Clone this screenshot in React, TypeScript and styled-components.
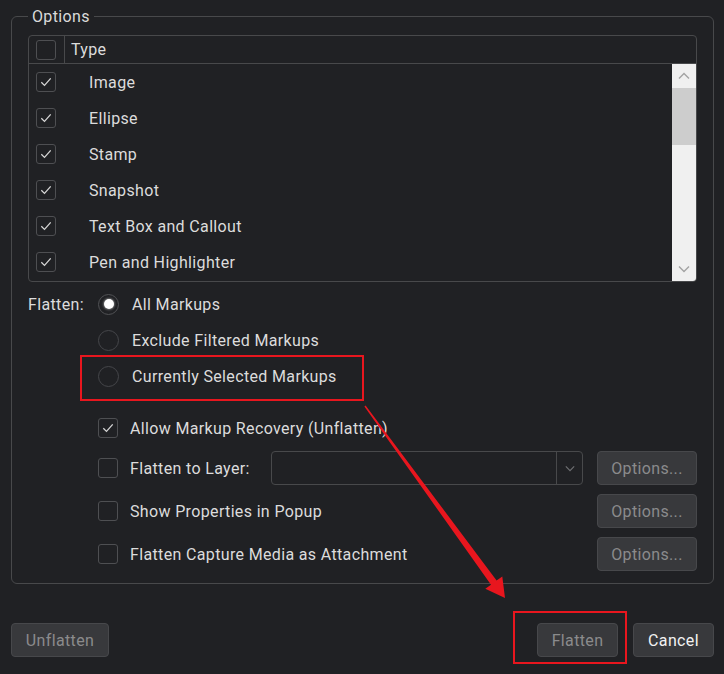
import React from 'react';
import styled, { createGlobalStyle } from 'styled-components';

const Global = createGlobalStyle`
  html, body { margin: 0; padding: 0; background: #202124; }
  body {
    font-family: Roboto, "Noto Sans", Arial, sans-serif;
    font-size: 16px;
    letter-spacing: 0.35px;
    color: #dcdcdc;
  }
  * { box-sizing: border-box; }
`;

const Page = styled.div`
  position: relative;
  width: 724px;
  height: 674px;
  padding: 7px 10px 0 11px;
  display: flex;
  flex-direction: column;
`;

const Fieldset = styled.fieldset`
  margin: 0;
  min-width: 0;
  width: 703px;
  border: 1px solid #48494b;
  border-radius: 6px;
  padding: 9px 16px 12px 16px;
`;

const Legend = styled.legend`
  padding: 0 4px;
  line-height: 19px;
  color: #dadada;
`;

const Table = styled.div`
  border: 1px solid #48494b;
  border-radius: 4px;
  overflow: hidden;
  display: flex;
  flex-direction: column;
`;

const HeaderRow = styled.div`
  height: 28px;
  display: flex;
  align-items: stretch;
  border-bottom: 1px solid #48494b;
`;

const HeaderCheckCell = styled.div`
  width: 36px;
  border-right: 1px solid #48494b;
  display: flex;
  align-items: center;
  padding-left: 7px;
`;

const HeaderText = styled.div`
  display: flex;
  align-items: center;
  padding-left: 6px;
`;

const Body = styled.div`
  display: flex;
  height: 217px;
`;

const List = styled.div`
  flex: 1;
  display: flex;
  flex-direction: column;
`;

const ListRow = styled.div`
  height: 36px;
  display: flex;
  align-items: center;
  padding-left: 7px;
  gap: 33px;
`;

const Scrollbar = styled.div`
  width: 24px;
  background: #f0f0f0;
  display: flex;
  flex-direction: column;
`;

const ScrollButton = styled.div`
  height: 24px;
  display: flex;
  align-items: center;
  justify-content: center;
`;

const Thumb = styled.div`
  height: 57px;
  background: #cdcdcd;
`;

const Track = styled.div`
  flex: 1;
`;

const Box = styled.div`
  width: 20px;
  height: 20px;
  flex: none;
  border: 1px solid #4e4f52;
  border-radius: 3px;
  display: flex;
  align-items: center;
  justify-content: center;
`;

const RadioGrid = styled.div`
  margin-top: 4px;
  display: grid;
  grid-template-columns: 70px 1fr;
  grid-auto-rows: 36px;
  align-items: center;
`;

const RadioLabel = styled.div`
  grid-column: 1;
  grid-row: 1;
`;

const RadioRow = styled.div<{ $row: number }>`
  grid-column: 2;
  grid-row: ${(p) => p.$row};
  display: flex;
  align-items: center;
  gap: 13px;
`;

const RadioCircle = styled.div<{ $on?: boolean }>`
  width: 21px;
  height: 21px;
  border-radius: 50%;
  border: 1.5px solid ${(p) => (p.$on ? '#505154' : '#45464a')};
  display: flex;
  align-items: center;
  justify-content: center;
  &::after {
    content: '';
    display: ${(p) => (p.$on ? 'block' : 'none')};
    width: 10px;
    height: 10px;
    border-radius: 50%;
    background: #ffffff;
    box-shadow: 0 0 2px 1px rgba(255, 255, 255, 0.35);
  }
`;

const OptionRows = styled.div`
  margin-top: 17px;
  display: flex;
  flex-direction: column;
  padding-left: 70px;
`;

const OptionRow = styled.div<{ $mt: number }>`
  height: 34px;
  margin-top: ${(p) => p.$mt}px;
  display: flex;
  align-items: center;
  gap: 12px;
`;

const OptionText = styled.div`
  flex: 1;
  white-space: nowrap;
`;

const Dropdown = styled.div`
  width: 312px;
  height: 34px;
  margin-right: 2px;
  border: 1px solid #48494b;
  border-radius: 4px;
  display: flex;
  justify-content: flex-end;
`;

const DropArrow = styled.div`
  width: 26px;
  border-left: 1px solid #48494b;
  display: flex;
  align-items: center;
  justify-content: center;
`;

const Button = styled.button<{ $w: number; $enabled?: boolean }>`
  width: ${(p) => p.$w}px;
  height: 34px;
  flex: none;
  background: #38393c;
  border: 1px solid #47484b;
  border-radius: 4px;
  font-family: Roboto, "Noto Sans", Arial, sans-serif;
  font-size: 16px;
  letter-spacing: 0.35px;
  color: ${(p) => (p.$enabled ? '#f2f2f2' : '#8b8b8c')};
  padding: 0;
`;

const Footer = styled.div`
  margin-top: 39px;
  display: flex;
  justify-content: space-between;
`;

const FooterRight = styled.div`
  display: flex;
  gap: 15px;
`;

const Overlay = styled.svg`
  position: absolute;
  left: 0;
  top: 0;
  width: 724px;
  height: 674px;
  pointer-events: none;
`;

const Check = () => (
  <svg width="14" height="14" viewBox="0 0 14 14">
    <path d="M2.3 7.2 L5.5 10.4 L11.7 3.4" fill="none" stroke="#d6d6d6" strokeWidth="1.3" />
  </svg>
);

const CheckBox = ({ checked }: { checked?: boolean }) => <Box>{checked ? <Check /> : null}</Box>;

const Chevron = ({ up, color, size }: { up?: boolean; color: string; size: number }) => (
  <svg width={size} height={size / 2 + 2} viewBox="0 0 12 8">
    <path
      d={up ? 'M1 6.5 L6 1.5 L11 6.5' : 'M1 1.5 L6 6.5 L11 1.5'}
      fill="none"
      stroke={color}
      strokeWidth="1.4"
    />
  </svg>
);

const types = ['Image', 'Ellipse', 'Stamp', 'Snapshot', 'Text Box and Callout', 'Pen and Highlighter'];

export default function App() {
  return (
    <Page>
      <Global />
      <Fieldset>
        <Legend>Options</Legend>
        <Table>
          <HeaderRow>
            <HeaderCheckCell>
              <CheckBox />
            </HeaderCheckCell>
            <HeaderText>Type</HeaderText>
          </HeaderRow>
          <Body>
            <List>
              {types.map((t) => (
                <ListRow key={t}>
                  <CheckBox checked />
                  <span>{t}</span>
                </ListRow>
              ))}
            </List>
            <Scrollbar>
              <ScrollButton>
                <Chevron up color="#a3a3a3" size={12} />
              </ScrollButton>
              <Thumb />
              <Track />
              <ScrollButton>
                <Chevron color="#a3a3a3" size={12} />
              </ScrollButton>
            </Scrollbar>
          </Body>
        </Table>

        <RadioGrid>
          <RadioLabel>Flatten:</RadioLabel>
          <RadioRow $row={1}>
            <RadioCircle $on />
            <span>All Markups</span>
          </RadioRow>
          <RadioRow $row={2}>
            <RadioCircle />
            <span>Exclude Filtered Markups</span>
          </RadioRow>
          <RadioRow $row={3}>
            <RadioCircle />
            <span>Currently Selected Markups</span>
          </RadioRow>
        </RadioGrid>

        <OptionRows>
          <OptionRow $mt={0}>
            <CheckBox checked />
            <OptionText>Allow Markup Recovery (Unflatten)</OptionText>
          </OptionRow>
          <OptionRow $mt={6}>
            <CheckBox />
            <OptionText>Flatten to Layer:</OptionText>
            <Dropdown>
              <DropArrow>
                <Chevron color="#6e6f72" size={10} />
              </DropArrow>
            </Dropdown>
            <Button $w={100}>Options...</Button>
          </OptionRow>
          <OptionRow $mt={9}>
            <CheckBox />
            <OptionText>Show Properties in Popup</OptionText>
            <Button $w={100}>Options...</Button>
          </OptionRow>
          <OptionRow $mt={9}>
            <CheckBox />
            <OptionText>Flatten Capture Media as Attachment</OptionText>
            <Button $w={100}>Options...</Button>
          </OptionRow>
        </OptionRows>
      </Fieldset>

      <Footer>
        <Button $w={98}>Unflatten</Button>
        <FooterRight>
          <Button $w={81}>Flatten</Button>
          <Button $w={81} $enabled>
            Cancel
          </Button>
        </FooterRight>
      </Footer>

      <Overlay viewBox="0 0 724 674">
        <rect x="81" y="356" width="282" height="44" fill="none" stroke="#e8161e" strokeWidth="2" />
        <rect x="514" y="612" width="112" height="51" fill="none" stroke="#e8161e" strokeWidth="2" />
        <polygon
          points="365.6,405.6 496.6,580.5 502.3,576.4 505,598 485.3,588.8 491,584.7 364.4,406.4"
          fill="#e8161e"
        />
      </Overlay>
    </Page>
  );
}
